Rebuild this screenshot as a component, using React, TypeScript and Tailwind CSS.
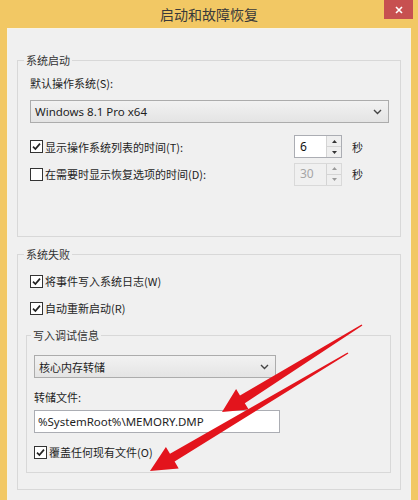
import React from 'react';

const latin = { fontFamily: '"Segoe UI", "Noto Sans", "Noto Sans CJK SC", sans-serif' };

const Check = ({ checked }: { checked?: boolean }) => (
  <span className="flex h-[13px] w-[13px] shrink-0 items-center justify-center border border-[#333] bg-white">
    {checked && (
      <svg width="9" height="9" viewBox="0 0 9 9">
        <path d="M1 4.6 L3.4 7 L8 1.6" fill="none" stroke="#222" strokeWidth="1.7" />
      </svg>
    )}
  </span>
);

const CheckRow = ({ checked, label }: { checked?: boolean; label: string }) => (
  <div className="flex h-[16px] items-center gap-[2px]">
    <Check checked={checked} />
    <span>{label}</span>
  </div>
);

const Chevron = () => (
  <svg width="9" height="6" viewBox="0 0 9 6">
    <path d="M1 1 L4.5 4.5 L8 1" fill="none" stroke="#444" strokeWidth="1.4" />
  </svg>
);

const Select = ({ text, width }: { text: string; width: string }) => (
  <div className={`flex h-[23px] ${width} items-center justify-between border border-[#acacac] bg-gradient-to-b from-[#f2f2f2] to-[#e4e4e4] pl-[4px] pr-[6px]`}>
    <span>{text}</span>
    <Chevron />
  </div>
);

const Spin = ({ value, disabled }: { value: string; disabled?: boolean }) => (
  <div className={`flex h-[23px] w-[48px] border ${disabled ? 'border-[#d9d9d9] bg-[#f0f0f0]' : 'border-[#abadb3] bg-white'}`}>
    <div className={`flex flex-1 items-center pl-[5px] text-[12px] ${disabled ? 'text-[#a6a6a6]' : 'text-[#111]'}`} style={latin}>
      {value}
    </div>
    <div className="flex w-[15px] flex-col border-l border-[#d4d4d4] bg-[#efefef]">
      <div className="flex flex-1 items-center justify-center border-b border-[#d4d4d4]">
        <svg width="5" height="3" viewBox="0 0 5 3"><path d="M0 3 L2.5 0 L5 3 Z" fill={disabled ? '#9a9a9a' : '#333'} /></svg>
      </div>
      <div className="flex flex-1 items-center justify-center">
        <svg width="5" height="3" viewBox="0 0 5 3"><path d="M0 0 L2.5 3 L5 0 Z" fill={disabled ? '#9a9a9a' : '#333'} /></svg>
      </div>
    </div>
  </div>
);

export default function App() {
  return (
    <div
      className="relative h-[500px] w-[418px] overflow-hidden bg-[#f2c864] text-[11px] leading-[16px] text-[#1e1e1e]"
      style={{ fontFamily: '"Noto Sans CJK SC", "Noto Sans", sans-serif' }}
    >
      {/* title bar */}
      <div className="relative flex h-[28px] items-center justify-center">
        <span className="text-[14px] text-[#3a3a3a]">启动和故障恢复</span>
        <div className="absolute right-[5px] top-0 flex h-[19px] w-[29px] items-center justify-center bg-[#c75050]">
          <svg width="8" height="8" viewBox="0 0 8 8">
            <path d="M1 1 L7 7 M7 1 L1 7" stroke="#fff" strokeWidth="1.6" />
          </svg>
        </div>
      </div>

      {/* body */}
      <div className="mx-[7px] h-[480px] border border-[#f7f3e6] bg-[#f0f0f0] pl-[9px] pr-[9px] pt-[23px]">
        <fieldset className="border border-[#d8d8d8] pb-[50px] pl-[12px] pr-[10px]">
          <legend className="-ml-[6px] px-[2px] text-[#333]">系统启动</legend>
          <div className="mt-[7px]">默认操作系统(S):</div>
          <div className="mt-[9px] text-[11.5px]" style={latin}>
            <Select text="Windows 8.1 Pro x64" width="w-[359px]" />
          </div>
          <div className="mt-[12px] flex h-[23px] items-center">
            <div className="w-[264px]">
              <CheckRow checked label="显示操作系统列表的时间(T):" />
            </div>
            <Spin value="6" />
            <span className="ml-[10px]">秒</span>
          </div>
          <div className="mt-[4px] flex h-[24px] items-center">
            <div className="w-[264px]">
              <CheckRow label="在需要时显示恢复选项的时间(D):" />
            </div>
            <Spin value="30" disabled />
            <span className="ml-[10px]">秒</span>
          </div>
        </fieldset>

        <fieldset className="mt-[9px] border border-[#d8d8d8] pb-[16px] pl-[12px] pr-[10px]">
          <legend className="-ml-[6px] px-[2px] text-[#333]">系统失败</legend>
          <div className="mt-[11px]">
            <CheckRow checked label="将事件写入系统日志(W)" />
          </div>
          <div className="mt-[11px]">
            <CheckRow checked label="自动重新启动(R)" />
          </div>
          <fieldset className="-ml-[4px] -mr-[1px] mt-[11px] border border-[#d8d8d8] pb-[12px] pl-[7px]">
            <legend className="-ml-[3px] px-[2px] text-[#333]">写入调试信息</legend>
            <div className="mt-[12px]">
              <Select text="核心内存转储" width="w-[242px]" />
            </div>
            <div className="mt-[11px]">转储文件:</div>
            <div
              className="mt-[5px] flex h-[23px] w-[246px] items-center border border-[#abadb3] bg-white pl-[3px] text-[11.5px]"
              style={latin}
            >
              %SystemRoot%\MEMORY.DMP
            </div>
            <div className="mt-[11px]">
              <CheckRow checked label="覆盖任何现有文件(O)" />
            </div>
          </fieldset>
        </fieldset>
      </div>

      {/* red annotation arrows */}
      <svg className="pointer-events-none absolute left-0 top-0" width="418" height="500" viewBox="0 0 418 500">
        <polygon
          points="362.4,325.6 244.8,403.2 248.7,409.5 222,412 236.1,389.1 240,395.5 361.6,324.4"
          fill="#e3141c"
        />
        <polygon
          points="348.4,353.6 174.6,461.6 178.7,468.4 150,471 165.9,447 170,453.8 347.6,352.4"
          fill="#e3141c"
        />
      </svg>
    </div>
  );
}
